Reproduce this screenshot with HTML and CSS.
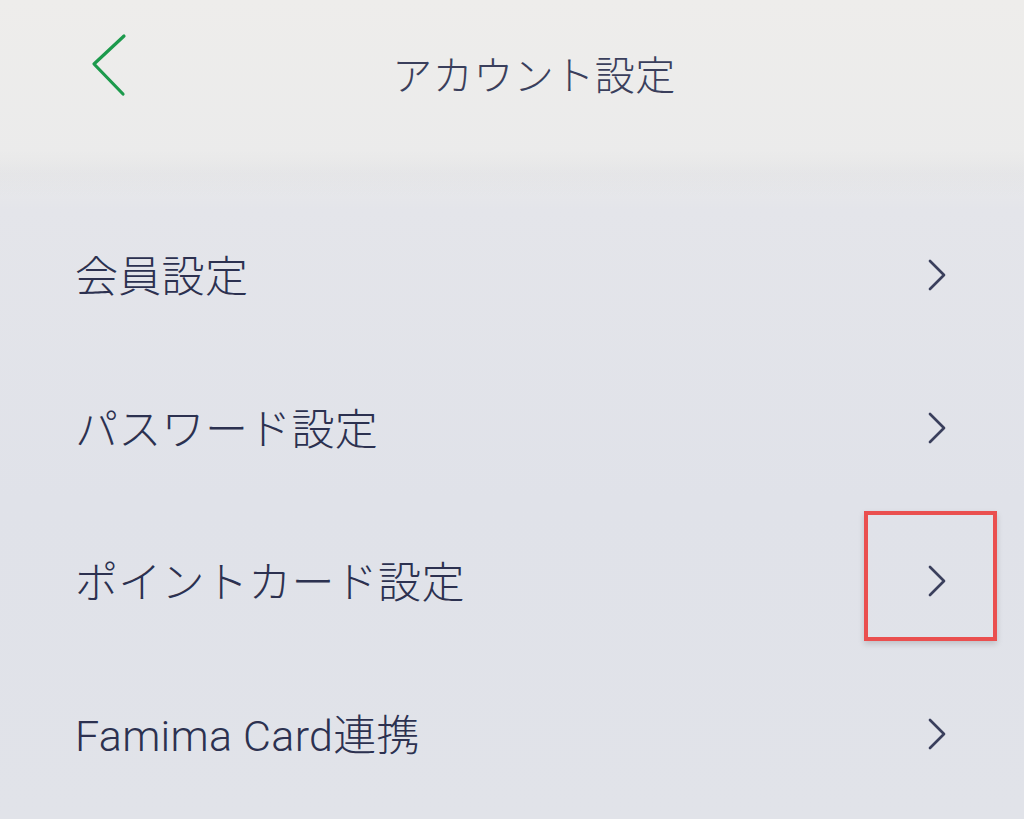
FILE: index.html
```html
<!DOCTYPE html>
<html lang="ja">
<head>
    <meta charset="utf-8">
    <title>アカウント設定</title>
    <link rel="stylesheet" href="styles.css">
</head>
<body>
    <div class="screen">
        <header class="topbar">
            <button class="back" aria-label="戻る">
                <svg width="40" height="64" viewBox="0 0 40 64">
                    <path d="M34 3 L4 31 L33 61" fill="none" stroke="#1c9a4c" stroke-width="3.2" stroke-linecap="round" stroke-linejoin="round"/>
                </svg>
            </button>
            <h1 class="title">アカウント設定</h1>
        </header>
        <div class="shade"></div>
        <ul class="menu">
            <li class="item">
                <span class="label">会員設定</span>
                <span class="arrow">
                    <svg width="22" height="32" viewBox="0 0 22 32"><path d="M4 2 L18 16 L4 30" fill="none" stroke="#3a3f5c" stroke-width="2.7" stroke-linecap="round" stroke-linejoin="round"/></svg>
                </span>
            </li>
            <li class="item">
                <span class="label">パスワード設定</span>
                <span class="arrow">
                    <svg width="22" height="32" viewBox="0 0 22 32"><path d="M4 2 L18 16 L4 30" fill="none" stroke="#3a3f5c" stroke-width="2.7" stroke-linecap="round" stroke-linejoin="round"/></svg>
                </span>
            </li>
            <li class="item">
                <span class="label">ポイントカード設定</span>
                <span class="arrow">
                    <svg width="22" height="32" viewBox="0 0 22 32"><path d="M4 2 L18 16 L4 30" fill="none" stroke="#3a3f5c" stroke-width="2.7" stroke-linecap="round" stroke-linejoin="round"/></svg>
                    <span class="highlight"></span>
                </span>
            </li>
            <li class="item">
                <span class="label">Famima Card連携</span>
                <span class="arrow">
                    <svg width="22" height="32" viewBox="0 0 22 32"><path d="M4 2 L18 16 L4 30" fill="none" stroke="#3a3f5c" stroke-width="2.7" stroke-linecap="round" stroke-linejoin="round"/></svg>
                </span>
            </li>
        </ul>
    </div>
</body>
</html>
```

FILE: styles.css
```css
html, body {
    margin: 0;
    height: 100%;
}
body {
    font-family: Roboto, "Noto Sans CJK JP", sans-serif;
    background-color: #e2e4ea;
    color: #30354f;
}
.screen {
    height: 819px;
    overflow: hidden;
    background: linear-gradient(180deg, #eeedeb 0px, #ebebeb 160px, #e4e5ea 210px, #e0e2e9 500px, #e1e3e9 819px);
}
.topbar {
    height: 150px;
    display: flex;
    align-items: flex-start;
}
.back {
    background: none;
    border: none;
    padding: 0;
    margin: 33px 0 0 90px;
    width: 40px;
    height: 64px;
    cursor: pointer;
}
.title {
    flex: 1;
    margin: 44px 0 0 0;
    padding-right: 86px;
    font-size: 40px;
    font-weight: 300;
    text-align: center;
    color: #3a3f5c;
    letter-spacing: 0.5px;
}
.shade {
    height: 48px;
    background: linear-gradient(180deg, rgba(0, 0, 0, 0) 0%, rgba(70, 75, 100, 0.025) 50%, rgba(0, 0, 0, 0) 100%);
}
.menu {
    list-style: none;
    margin: 0;
    padding: 0;
}
.item {
    height: 153px;
    display: flex;
    align-items: center;
    justify-content: space-between;
    padding: 0 76px 0 75px;
}
.label {
    font-size: 43px;
    font-weight: 300;
    color: #2c3150;
    letter-spacing: 0.3px;
    margin-top: -4px;
}
.arrow {
    position: relative;
    display: flex;
    width: 22px;
    height: 32px;
}
.highlight {
    position: absolute;
    left: -62px;
    top: -54px;
    width: 125px;
    height: 122px;
    border: 4px solid #ea4f4f;
    box-shadow: 0 3px 6px rgba(0, 0, 0, 0.15);
}
```
